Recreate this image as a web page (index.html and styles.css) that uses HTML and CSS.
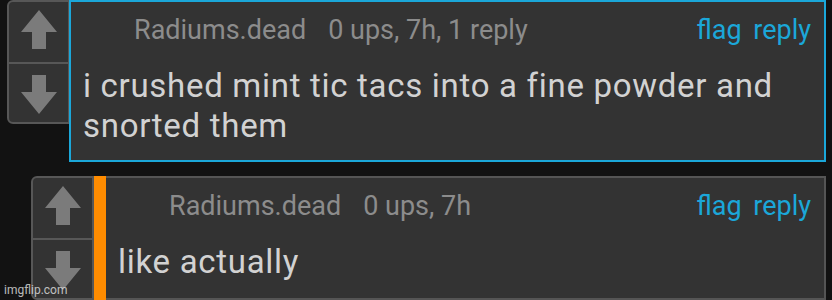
FILE: index.html
```html
<!DOCTYPE html>
<html lang="en">
<head>
    <meta charset="UTF-8">
    <meta name="viewport" content="width=device-width, initial-scale=1.0">
    <title>Comments</title>
    <link rel="stylesheet" href="styles.css">
</head>
<body>
    <div class="thread">
      <div class="comment">
        <div class="votes">
          <div class="vote">
            <svg width="36" height="39" viewBox="0 0 36 39"><polygon points="18,0 36,22 25,22 25,39 11,39 11,22 0,22" /></svg>
          </div>
          <div class="vote vote-down">
            <svg width="36" height="39" viewBox="0 0 36 39"><polygon points="11,0 25,0 25,17 36,17 18,39 0,17 11,17" /></svg>
          </div>
        </div>
        <div class="box box-selected">
          <div class="head">
            <span class="user">Radiums.dead</span>
            <span class="meta">0 ups, 7h, 1 reply</span>
            <span class="actions"><span>flag</span> <span>reply</span></span>
          </div>
          <div class="text">i crushed mint tic tacs into a fine powder and snorted them</div>
        </div>
      </div>

      <div class="comment reply">
        <div class="votes">
          <div class="vote">
            <svg width="36" height="39" viewBox="0 0 36 39"><polygon points="18,0 36,22 25,22 25,39 11,39 11,22 0,22" /></svg>
          </div>
          <div class="vote vote-down">
            <svg width="36" height="39" viewBox="0 0 36 39"><polygon points="11,0 25,0 25,17 36,17 18,39 0,17 11,17" /></svg>
          </div>
        </div>
        <div class="op-bar"></div>
        <div class="box">
          <div class="head">
            <span class="user">Radiums.dead</span>
            <span class="meta">0 ups, 7h</span>
            <span class="actions"><span>flag</span> <span>reply</span></span>
          </div>
          <div class="text">like actually</div>
        </div>
      </div>
    </div>
    <div class="watermark">imgflip.com</div>
</body>
</html>
```

FILE: styles.css
```css
body { margin: 0; background: #121212; font-family: Roboto, "Liberation Sans", sans-serif; height: 300px; overflow: hidden; position: relative; }
.thread { padding: 0 6px 0 7px; }
.comment { display: flex; align-items: flex-start; margin-bottom: 14px; }
.reply { margin-left: 24px; align-items: stretch; }
.votes { width: 63px; flex-shrink: 0; border: 2px solid #575757; border-radius: 6px 0 0 6px; background: #333; box-sizing: border-box; }
.vote { height: 60px; display: flex; justify-content: center; padding-top: 8px; box-sizing: border-box; }
.vote-down { border-top: 2px solid #575757; padding-top: 11px; }
.vote svg { fill: #7b7b7b; }
.box { flex: 1; background: #333; border: 2px solid #555; border-left: none; padding: 8px 13px 14px 12px; }
.box-selected { border: 2px solid #1ba7d9; margin-left: -1px; }
.op-bar { width: 12px; background: #ff8c00; flex-shrink: 0; }
.head { display: flex; align-items: baseline; font-size: 27px; line-height: 40px; color: #8c8c8c; padding-left: 51px; }
.meta { margin-left: 22px; }
.actions { margin-left: auto; color: #1ba7d9; word-spacing: 5px; }
.text { margin-top: 16px; font-size: 33px; letter-spacing: 0.7px; line-height: 40px; color: #d2d2d2; }
.watermark { position: absolute; left: 4px; top: 283px; font-size: 12px; color: rgba(230,230,230,0.8); }
```
